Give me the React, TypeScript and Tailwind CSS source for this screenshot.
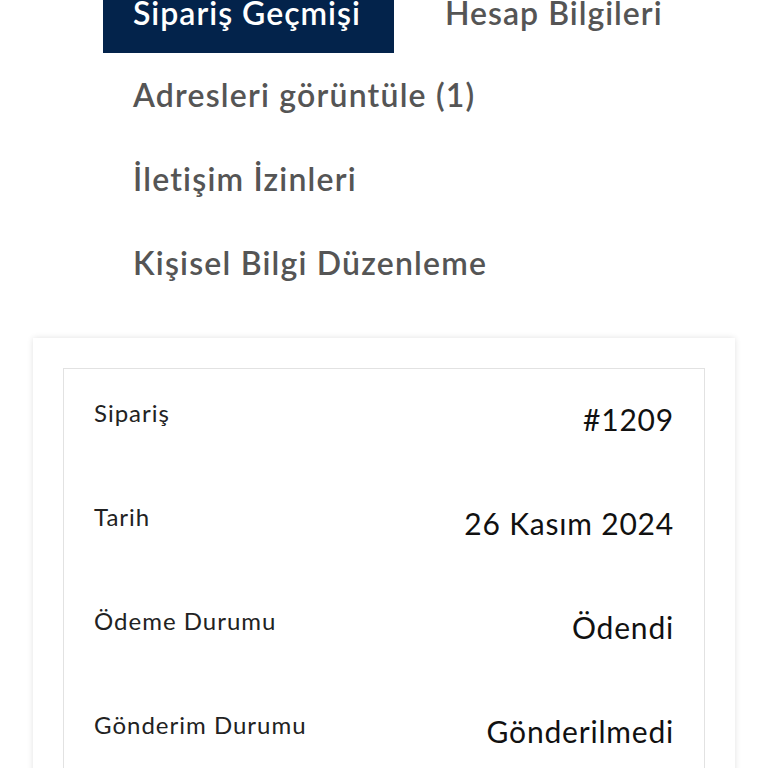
const tabs = ['Adresleri görüntüle (1)', 'İletişim İzinleri', 'Kişisel Bilgi Düzenleme'];

const rows = [
  { label: 'Sipariş', value: '#1209' },
  { label: 'Tarih', value: '26 Kasım 2024' },
  { label: 'Ödeme Durumu', value: 'Ödendi' },
  { label: 'Gönderim Durumu', value: 'Gönderilmedi' },
];

export default function App() {
  return (
    <div className="h-[768px] w-[768px] overflow-hidden bg-white font-['Lato',sans-serif]">
      {/* Account menu */}
      <div className="flex items-center -mt-[27px] pl-[103px]">
        <div className="flex h-[80px] w-[291px] items-center bg-[#03234b] pl-[30px] text-[32px] font-semibold tracking-[1px] text-white">
          <span className="mt-[-1px]">Sipariş Geçmişi</span>
        </div>
        <div className="ml-[51px] -mt-[1px] text-[32px] font-semibold tracking-[1px] text-[#555]">Hesap Bilgileri</div>
      </div>
      <div className="flex flex-col pl-[133px]">
        {tabs.map((t) => (
          <div key={t} className="flex h-[84px] items-center text-[32px] font-semibold tracking-[1.2px] text-[#555]">
            {t}
          </div>
        ))}
      </div>

      {/* Order card */}
      <div className="mx-[33px] mt-[33px] bg-white px-[30px] pt-[30px] shadow-[0_0_6px_rgba(0,0,0,0.12)]">
        <div className="border border-[#e2e2e2] px-[30px] pt-[26px]">
          {rows.map((r) => (
            <div key={r.label} className="flex h-[104px] items-start justify-between">
              <span className="text-[24px] tracking-[1px] text-[#222]">{r.label}</span>
              <span className="mt-[2px] text-[30px] tracking-[0.8px] text-[#111]">{r.value}</span>
            </div>
          ))}
        </div>
      </div>
    </div>
  );
}
